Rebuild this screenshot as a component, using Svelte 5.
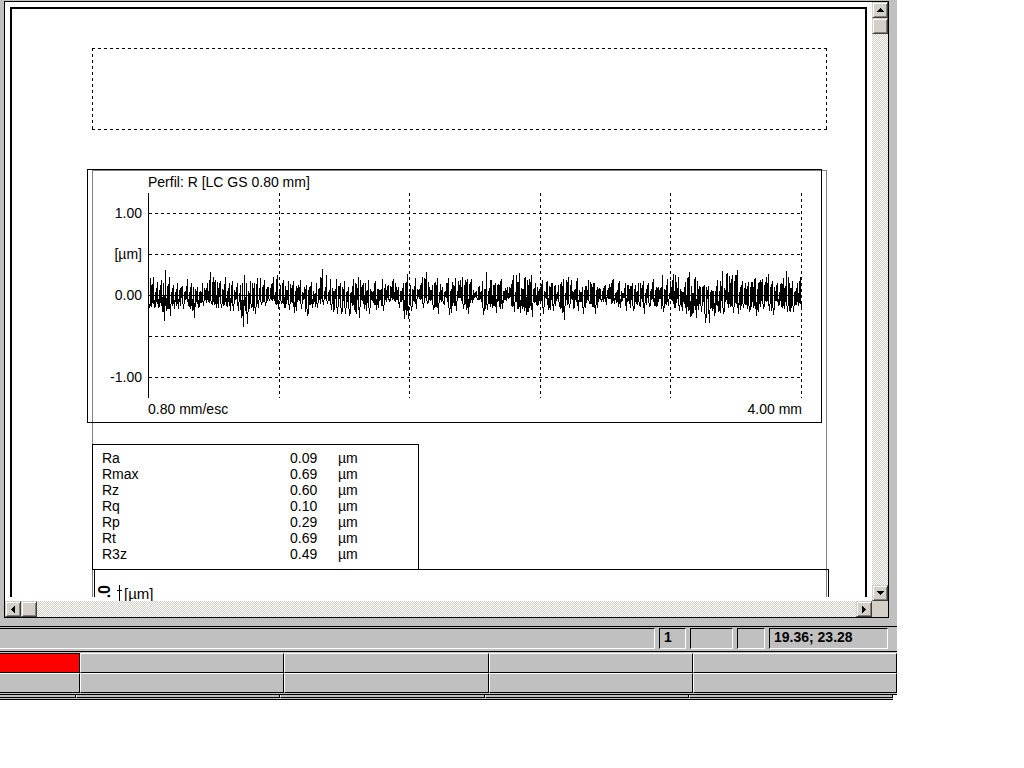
<script lang="ts">
    const results = [
        { name: 'Ra', value: '0.09' },
        { name: 'Rmax', value: '0.69' },
        { name: 'Rz', value: '0.60' },
        { name: 'Rq', value: '0.10' },
        { name: 'Rp', value: '0.29' },
        { name: 'Rt', value: '0.69' },
        { name: 'R3z', value: '0.49' },
    ];

    const scale = ['1.00', '[µm]', '0.00', '', '-1.00'];
    const hLines = [20, 61, 143, 184];
    const vLines = [131, 261, 392, 522, 653];

    // roughness envelope: x, height above zero, depth below zero
    const envelope = [
        [0, 18, 12], [5, 18, 12], [9, 13, 12], [13, 15, 16], [15, 12, 25], [17, 25, 15], [21, 18, 20],
        [25, 10, 13], [29, 12, 13], [34, 9, 13], [39, 16, 10], [43, 12, 15], [45, 8, 22], [49, 8, 12],
        [54, 12, 10], [59, 12, 6], [62, 23, 8], [67, 15, 12], [72, 14, 12], [77, 18, 10], [81, 12, 15],
        [84, 14, 15], [89, 12, 15], [92, 10, 22], [94, 12, 31], [96, 20, 15], [98, 12, 28], [102, 14, 12],
        [106, 12, 18], [109, 17, 12], [112, 17, 9], [116, 15, 10], [120, 8, 5], [125, 18, 5], [129, 20, 13],
        [132, 10, 8], [135, 15, 12], [140, 14, 14], [145, 14, 17], [152, 15, 13], [158, 10, 20], [163, 13, 12],
        [168, 12, 12], [174, 26, 9], [178, 20, 8], [182, 16, 14], [188, 16, 18], [192, 12, 18], [196, 14, 18],
        [200, 8, 20], [205, 16, 14], [210, 18, 22], [215, 12, 13], [220, 15, 18], [227, 14, 14], [234, 16, 15],
        [240, 10, 6], [245, 16, 5], [250, 8, 12], [255, 12, 23], [259, 21, 23], [262, 10, 15], [267, 17, 13],
        [274, 18, 12], [278, 23, 8], [284, 10, 14], [289, 17, 18], [294, 8, 8], [300, 17, 19], [307, 17, 15],
        [314, 18, 13], [319, 16, 18], [323, 16, 7], [328, 4, 4], [334, 14, 19], [338, 23, 14], [343, 15, 12],
        [347, 12, 17], [353, 16, 13], [359, 8, 3], [365, 20, 16], [371, 22, 17], [377, 18, 19], [383, 20, 21],
        [387, 12, 9], [394, 15, 18], [399, 14, 14], [404, 12, 15], [410, 10, 10], [415, 16, 24], [420, 18, 12],
        [429, 17, 15], [434, 8, 18], [440, 15, 8], [446, 12, 18], [452, 6, 6], [457, 10, 9], [465, 16, 8],
        [471, 14, 12], [477, 12, 15], [484, 12, 15], [490, 12, 9], [495, 14, 18], [500, 12, 11], [505, 16, 10],
        [514, 20, 16], [519, 16, 10], [525, 21, 12], [530, 18, 15], [537, 13, 18], [541, 23, 21], [547, 18, 22],
        [552, 8, 16], [556, 10, 27], [560, 9, 27], [565, 4, 20], [569, 15, 16], [574, 24, 18], [579, 22, 12],
        [584, 20, 17], [589, 25, 18], [594, 14, 12], [600, 13, 16], [607, 17, 20], [614, 16, 13], [620, 21, 15],
        [624, 14, 19], [629, 12, 10], [638, 24, 16], [644, 14, 16], [649, 12, 10], [652, 18, 12],
    ];

    function tracePath() {
        let seed = 7;
        const next = () => {
            seed = (seed * 16807) % 2147483647;
            return seed / 2147483647;
        };
        // two strokes out of five reach far, the rest stay near the zero line
        const reach = () => (next() < 0.42 ? 0.6 + 0.4 * next() : 0.1 + 0.35 * next());
        let d = 'M0 102';
        for (let i = 0; i < envelope.length; i++) {
            const [x, up, down] = envelope[i];
            d += ` L${x} ${102 - up} V${102 + Math.round(down / 3)} L${x + 1} ${102 + down}`;
            if (i + 1 === envelope.length) break;
            const [nx, nUp, nDown] = envelope[i + 1];
            for (let k = x + 2; k < nx; k++) {
                const t = (k - x) / (nx - x);
                const high = Math.round((up + (nUp - up) * t) * reach());
                const low = Math.round((down + (nDown - down) * t) * reach());
                d += k % 2 ? ` L${k} ${102 - high} V${102 + low}` : ` L${k} ${102 + low} V${102 - high}`;
            }
        }
        return d;
    }

    const trace = tracePath();
</script>

<main class="window">
    <div class="view">
        <div class="scroller">
            <div class="paper">
                <svg class="header-slot" aria-hidden="true">
                    <rect x="0" y="0" width="100%" height="1" fill="url(#dash-h)" />
                    <rect x="0" y="81" width="100%" height="1" fill="url(#dash-h)" />
                    <rect x="0" y="0" width="1" height="82" fill="url(#dash-v)" />
                    <svg x="100%" overflow="visible"><rect x="-1" y="0" width="1" height="82" fill="url(#dash-v)" /></svg>
                    <defs>
                        <pattern id="dash-h" width="6" height="1" patternUnits="userSpaceOnUse"><rect width="3" height="1" /></pattern>
                        <pattern id="dash-v" width="1" height="6" patternUnits="userSpaceOnUse"><rect width="1" height="3" /></pattern>
                    </defs>
                </svg>

                <div class="report">
                    <section class="chart">
                        <h1>Perfil: R [LC GS 0.80 mm]</h1>
                        <div class="scale">
                            {#each scale as label}
                                <span>{label}</span>
                            {/each}
                        </div>
                        <svg class="plot" viewBox="0 0 654 205" preserveAspectRatio="none" shape-rendering="crispEdges">
                            <g transform="translate(0.5 0.5)" fill="none" stroke="#000">
                                {#each hLines as y}
                                    <path d="M0 {y}H653" stroke-dasharray="3 3" />
                                {/each}
                                {#each vLines as x}
                                    <path d="M{x} -1V204" stroke-dasharray="3 3" />
                                {/each}
                                <path d="M0 -1V204M0 102H653" />
                                <path d={trace} stroke-linejoin="bevel" />
                            </g>
                        </svg>
                        <div class="range"><span>0.80 mm/esc</span><span>4.00 mm</span></div>
                    </section>

                    <div class="results">
                        <table>
                            <tbody>
                                {#each results as row}
                                    <tr>
                                        <th scope="row">{row.name}</th>
                                        <td class="value">{row.value}</td>
                                        <td>µm</td>
                                    </tr>
                                {/each}
                            </tbody>
                        </table>
                    </div>

                    <section class="next-chart">
                        <span class="vertical">.0</span>
                        <svg class="axis" width="5" height="16" shape-rendering="crispEdges"><path d="M2 0h1v16h-1zM0 5h5v1h-5z" /></svg>
                        <span class="unit">[µm]</span>
                    </section>
                </div>
            </div>
        </div>

        <div class="bar vertical-bar">
            <button aria-label="Scroll up"><svg width="7" height="4" shape-rendering="crispEdges"><path d="M3 0h1v1h1v1h1v1h1v1h-7v-1h1v-1h1v-1h1z" /></svg></button>
            <button class="thumb" aria-label="Vertical position"></button>
            <button class="last" aria-label="Scroll down"><svg width="7" height="4" shape-rendering="crispEdges"><path d="M0 0h7v1h-1v1h-1v1h-1v1h-1v-1h-1v-1h-1v-1h-1z" /></svg></button>
        </div>
        <div class="bar horizontal-bar">
            <button aria-label="Scroll left"><svg width="4" height="7" shape-rendering="crispEdges"><path d="M3 0h1v7h-1v-1h-1v-1h-1v-1h-1v-1h1v-1h1v-1h1z" /></svg></button>
            <button class="thumb" aria-label="Horizontal position"></button>
            <button class="last" aria-label="Scroll right"><svg width="4" height="7" shape-rendering="crispEdges"><path d="M0 0h1v1h1v1h1v1h1v1h-1v1h-1v1h-1v1h-1z" /></svg></button>
        </div>
        <div class="corner"></div>
    </div>

    <footer class="status">
        <span class="message"></span>
        <span class="page">1</span>
        <span class="mode"></span>
        <span class="flag"></span>
        <span class="position">19.36; 23.28</span>
    </footer>

    <div class="keys">
        <div class="key active"></div>
        {#each Array(9) as _}
            <div class="key"></div>
        {/each}
    </div>
    <div class="keys-edge">
        <div class="strip">
            {#each Array(5) as _}
                <i></i>
            {/each}
        </div>
    </div>
</main>

<style>
    :global(body) {
        background: #fff;
    }
    .window {
        margin-right: 127px;
        padding-top: 1px;
        background: #c0c0c0;
        color: #000;
        font: 14px/16px "Liberation Sans", Arial, sans-serif;
    }
    .view {
        display: grid;
        grid-template-columns: 1fr 16px;
        grid-template-rows: auto 16px;
        margin: 0 8px 8px 4px;
        border: 1px solid #000;
        background: #fff;
    }
    .scroller {
        min-width: 0;
        padding: 5px 5px 4px;
        overflow: hidden;
    }
    .paper {
        padding: 39px 38px 0 80px;
        border: solid #000;
        border-width: 2px 2px 0;
    }
    .header-slot {
        display: block;
        width: 100%;
        height: 82px;
        margin-bottom: 40px;
    }
    .report {
        border: solid #808080;
        border-width: 1px 1px 0;
    }

    .chart {
        display: grid;
        grid-template-columns: 60px 1fr;
        margin: -2px 4px 0 -6px;
        padding: 4px 19px 5px 0;
        border: 1px solid #000;
    }
    .chart h1 {
        grid-column: 2;
        margin: 0 0 3px;
        font-size: 14px;
        font-weight: normal;
        line-height: 16px;
    }
    .scale {
        display: grid;
        grid-auto-rows: 41px;
        padding: 12px 6px 0 0;
        height: 193px;
        text-align: right;
    }
    .plot {
        display: block;
        width: 100%;
        height: 205px;
        overflow: visible;
    }
    .range {
        grid-column: 2;
        display: flex;
        justify-content: space-between;
        padding-top: 3px;
    }

    .results {
        width: 325px;
        margin: 21px 0 0 -1px;
        padding: 5px 0 7px;
        border: 1px solid #000;
        background: #fff;
    }
    table {
        border-collapse: collapse;
    }
    th, td {
        height: 16px;
        padding: 0;
        font-weight: normal;
        text-align: left;
    }
    th {
        width: 188px;
        padding-left: 9px;
    }
    .value {
        width: 28px;
        padding-right: 20px;
    }
    th, .value {
        box-sizing: content-box;
    }
    th {
        width: 188px;
    }

    .next-chart {
        display: flex;
        align-items: flex-start;
        height: 27px;
        margin: -1px -3px 0 1px;
        border: solid #000;
        border-width: 1px 1px 0;
    }
    .vertical {
        margin-top: 15px;
        padding-right: 1px;
        font-size: 16px;
        font-weight: bold;
        line-height: 18px;
        writing-mode: vertical-rl;
        transform: rotate(180deg);
    }
    .axis {
        flex: none;
        margin: 15px 2px 0 3px;
    }
    .unit {
        margin-top: 16px;
        font-size: 15px;
    }

    .bar {
        display: flex;
        background: repeating-conic-gradient(#d4d0c8 0 25%, #fff 0 50%) 0 0 / 2px 2px;
    }
    .vertical-bar {
        flex-direction: column;
    }
    .bar button {
        display: flex;
        align-items: center;
        justify-content: center;
        flex: none;
        width: 16px;
        height: 16px;
        padding: 0;
        border: 1px solid;
        border-color: #d4d0c8 #404040 #404040 #d4d0c8;
        background: #d4d0c8;
        box-shadow: inset 1px 1px #fff, inset -1px -1px #808080;
    }
    .bar .last {
        margin-top: auto;
    }
    .horizontal-bar .last {
        margin: 0 0 0 auto;
    }
    .corner {
        background: #d4d0c8;
    }

    .status {
        display: flex;
        gap: 4px;
        padding: 1px 9px 2px 0;
        border: solid #000;
        border-width: 1px 0;
        font-weight: bold;
    }
    .status span {
        box-sizing: border-box;
        height: 21px;
        padding: 0 4px;
        border: 1px solid;
        border-color: #000 #fff #fff #000;
    }
    .status .message {
        flex: 1;
        border-left: 0;
    }
    .page { width: 27px; }
    .mode { width: 43px; }
    .flag { width: 28px; }
    .position { width: 119px; }

    .keys {
        display: grid;
        grid-template-columns: 80px repeat(4, 1fr);
        grid-auto-rows: 20px;
        padding: 1px 0;
    }
    .key {
        border: 1px solid;
        border-color: #fff #000 #000 #fff;
    }
    .key:nth-child(5n + 1) {
        border-left: 0;
    }
    .key.active {
        border-top-color: #000;
        background: #f00;
    }
    .keys-edge {
        border-top: 1px solid #000;
        background: #fff;
    }
    .strip {
        display: grid;
        grid-template-columns: 76px repeat(4, 1fr);
        margin-right: 4px;
        padding-bottom: 1px;
        border-bottom: 1px solid #000;
        background: #c0c0c0;
    }
    .strip i {
        height: 2px;
        border: solid #000;
        border-width: 0 1px 1px 0;
    }
    .strip i + i {
        border-left: 1px solid #fff;
    }
</style>
